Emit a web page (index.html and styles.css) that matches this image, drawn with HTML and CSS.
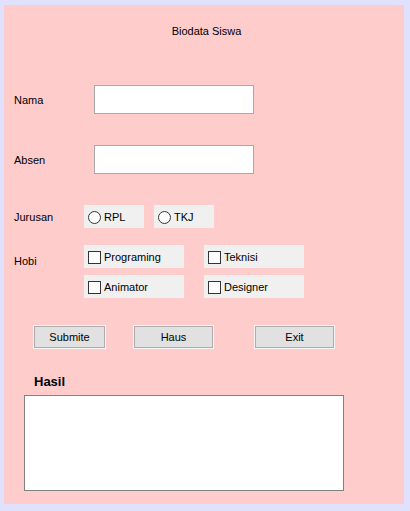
FILE: index.html
```html
<!DOCTYPE html>
<html>
<head>
<meta charset="utf-8">
<link rel="stylesheet" href="styles.css">
</head>
<body>
<div class="panel">
  <div class="title">Biodata Siswa</div>

  <div class="row row-nama">
    <div class="label">Nama</div>
    <div class="field"></div>
  </div>

  <div class="row row-absen">
    <div class="label">Absen</div>
    <div class="field"></div>
  </div>

  <div class="row row-jurusan">
    <div class="label">Jurusan</div>
    <div class="opts">
      <div class="opt"><span class="radio"></span><span>RPL</span></div>
      <div class="opt"><span class="radio"></span><span>TKJ</span></div>
    </div>
  </div>

  <div class="row row-hobi">
    <div class="label label-hobi">Hobi</div>
    <div class="checks">
      <div class="chk"><span class="box"></span><span>Programing</span></div>
      <div class="chk"><span class="box"></span><span>Teknisi</span></div>
      <div class="chk"><span class="box"></span><span>Animator</span></div>
      <div class="chk"><span class="box"></span><span>Designer</span></div>
    </div>
  </div>

  <div class="buttons">
    <div class="btn btn-submit">Submite</div>
    <div class="btn btn-haus">Haus</div>
    <div class="btn btn-exit">Exit</div>
  </div>

  <div class="hasil">Hasil</div>
  <div class="output"></div>
</div>
</body>
</html>
```

FILE: styles.css
```css
html, body {
  margin: 0;
  padding: 0;
}
body {
  background: #e0e0ff;
  font-family: "Liberation Sans", Arial, sans-serif;
  font-size: 11px;
  color: #000;
  width: 410px;
  height: 511px;
  overflow: hidden;
}
.panel {
  margin: 5px 6px 0 4px;
  width: 400px;
  height: 499px;
  background: #ffcccc;
  padding-top: 19px;
  box-sizing: border-box;
}
.title {
  line-height: 14px;
  height: 14px;
  text-align: center;
  padding-left: 5px;
}
.row {
  display: flex;
  align-items: center;
}
.label {
  width: 70px;
  padding-left: 10px;
  line-height: 14px;
}
.field {
  margin-left: 10px;
  width: 160px;
  height: 29px;
  box-sizing: border-box;
  background: #fff;
  border: 1px solid #a9a9a9;
}
.row-nama { margin-top: 47px; }
.row-absen { margin-top: 31px; }
.row-jurusan { margin-top: 31px; }
.opts {
  display: flex;
  gap: 10px;
}
.opt, .chk {
  display: flex;
  align-items: center;
  background: #f0f0f0;
  height: 23px;
  padding-left: 4px;
  box-sizing: border-box;
}
.opt { width: 60px; }
.radio {
  width: 13px;
  height: 13px;
  box-sizing: border-box;
  border: 1px solid #333;
  border-radius: 50%;
  background: #fff;
  margin-right: 3px;
  margin-top: 1px;
}
.row-hobi {
  margin-top: 17px;
  align-items: flex-start;
}
.label-hobi { margin-top: 9px; }
.checks {
  display: grid;
  grid-template-columns: 100px 100px;
  column-gap: 20px;
  row-gap: 7px;
}
.box {
  width: 13px;
  height: 13px;
  box-sizing: border-box;
  border: 1px solid #333;
  background: #fff;
  margin-right: 3px;
  margin-top: 2px;
}
.buttons {
  display: flex;
  margin-top: 28px;
  padding-left: 30px;
}
.btn {
  height: 22px;
  box-sizing: border-box;
  background: #e1e1e1;
  border: 1px solid #adadad;
  box-shadow: 0 0 0 1px #f4f4f4;
  display: flex;
  align-items: center;
  justify-content: center;
}
.btn-submit { width: 71px; }
.btn-haus { width: 79px; margin-left: 29px; }
.btn-exit { width: 79px; margin-left: 42px; }
.hasil {
  margin-top: 26px;
  padding-left: 30px;
  font-size: 13px;
  font-weight: bold;
  line-height: 16px;
}
.output {
  margin-top: 5px;
  margin-left: 20px;
  width: 320px;
  height: 96px;
  box-sizing: border-box;
  background: #fff;
  border: 1px solid #828282;
}
```
